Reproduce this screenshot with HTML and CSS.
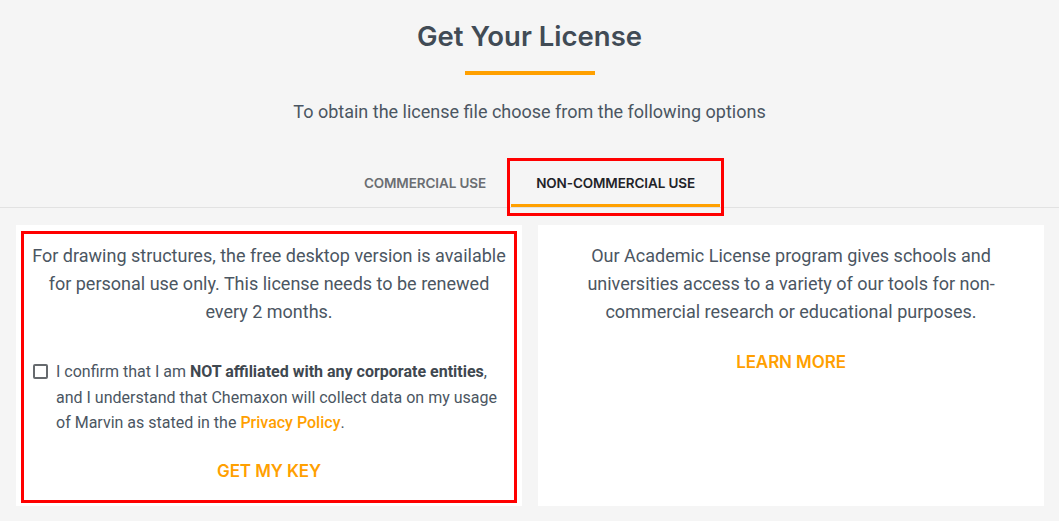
FILE: index.html
```html
<!DOCTYPE html>
<html lang="en">
<head>
<meta charset="utf-8">
<title>Get Your License</title>
<link rel="stylesheet" href="styles.css">
</head>
<body>
<section class="license">
  <header class="head">
    <h1 class="title">Get Your License</h1>
    <div class="bar"></div>
    <p class="subtitle">To obtain the license file choose from the following options</p>
  </header>
  <nav class="tabs">
    <a class="tab">COMMERCIAL USE</a>
    <a class="tab active">NON-COMMERCIAL USE<span class="mark mark-tab"></span></a>
  </nav>
  <div class="cards">
    <div class="card">
      <span class="mark mark-card"></span>
      <p class="text">For drawing structures, the free desktop version is available for personal use only. This license needs to be renewed every 2 months.</p>
      <label class="confirm">
        <span class="box"></span>
        <span class="confirm-text">I confirm that I am <b>NOT affiliated with any corporate entities</b>, and I understand that Chemaxon will collect data on my usage of Marvin as stated in the <a class="link">Privacy Policy</a>.</span>
      </label>
      <a class="action action-key">GET MY KEY</a>
    </div>
    <div class="card">
      <p class="text narrow">Our Academic License program gives schools and universities access to a variety of our tools for non-commercial research or educational purposes.</p>
      <a class="action action-learn">LEARN MORE</a>
    </div>
  </div>
</section>
</body>
</html>
```

FILE: styles.css
```css
* { box-sizing: border-box; }
html, body { margin: 0; padding: 0; }
body {
  background: #f5f5f5;
  font-family: Roboto, "Liberation Sans", sans-serif;
  color: #4b5662;
  width: 1059px;
  height: 521px;
  overflow: hidden;
}
.head {
  display: flex;
  flex-direction: column;
  align-items: center;
  padding-top: 18px;
}
.title {
  margin: 0;
  font-family: Inter, "Open Sans", sans-serif;
  font-weight: 600;
  font-size: 27.5px;
  line-height: 36px;
  color: #414b55;
  letter-spacing: 0;
}
.bar {
  margin-top: 17px;
  width: 130px;
  height: 4px;
  background: #ffa000;
}
.subtitle {
  margin: 23px 0 0;
  font-size: 18px;
  line-height: 28px;
  color: #4b5662;
}
.tabs {
  margin-top: 35px;
  display: flex;
  justify-content: center;
  border-bottom: 1px solid #e2e2e2;
}
.tab {
  position: relative;
  display: flex;
  align-items: center;
  height: 46px;
  padding: 0 25px;
  border-bottom: 3px solid transparent;
  font-family: Inter, "Open Sans", sans-serif;
  font-weight: 600;
  font-size: 13.5px;
  color: #6b6e72;
  letter-spacing: -0.1px;
}
.tab.active {
  color: #1f2328;
  border-bottom-color: #ffa000;
}
.mark {
  position: absolute;
  border: 3px solid #ff0000;
  pointer-events: none;
}
.mark-tab { left: -4px; right: -4px; top: -3px; bottom: -12px; }
.cards {
  margin-top: 17px;
  display: grid;
  grid-template-columns: 506px 506px;
  gap: 16px;
  padding-left: 16px;
}
.card {
  position: relative;
  background: #ffffff;
  height: 281px;
  padding: 17px 16px 0;
  display: flex;
  flex-direction: column;
  align-items: center;
}
.mark-card { left: 5px; right: 5px; top: 6px; bottom: 3px; }
.text {
  margin: 0;
  font-size: 18px;
  line-height: 28px;
  text-align: center;
  color: #4b5662;
}
.narrow { padding: 0 30px; }
.confirm {
  margin-top: 33px;
  display: flex;
  align-items: flex-start;
  gap: 8px;
  align-self: stretch;
  padding-left: 1px;
}
.box {
  flex: none;
  width: 15px;
  height: 15px;
  margin-top: 5px;
  border: 2px solid #666a6e;
  border-radius: 2px;
  background: #fff;
}
.confirm-text {
  font-size: 16px;
  line-height: 25.6px;
  color: #4b5662;
}
.confirm-text b { color: #3f4850; font-weight: 700; }
.link { color: #ffa000; font-weight: 500; }
.action {
  font-family: Inter, "Open Sans", sans-serif;
  font-weight: 600;
  font-size: 17px;
  line-height: 24px;
  color: #ffa000;
  letter-spacing: -0.1px;
}
.action-key { margin-top: 23px; }
.action-learn { margin-top: 24px; }
```
